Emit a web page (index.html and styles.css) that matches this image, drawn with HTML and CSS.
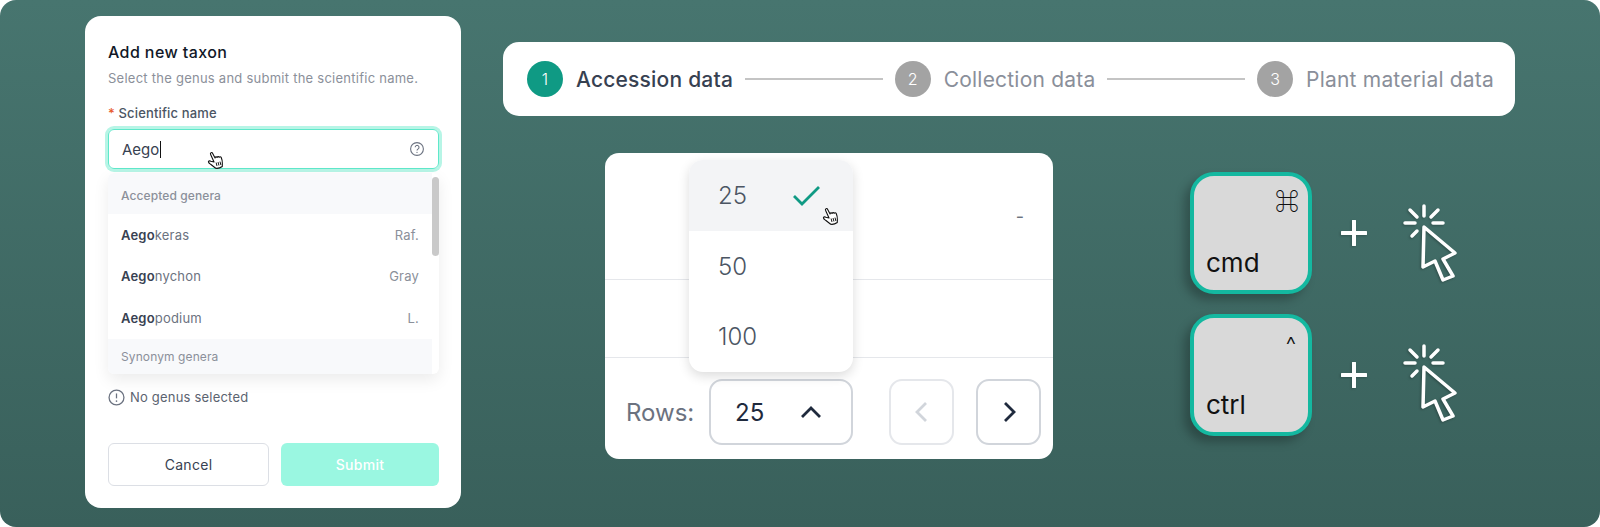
FILE: index.html
```html
<!DOCTYPE html>
<html lang="en">
<head>
<meta charset="utf-8">
<title>Taxon UI details</title>
<link rel="stylesheet" href="styles.css">
</head>
<body>
<main class="canvas">
  <section class="card">
    <h1 class="card-title">Add new taxon</h1>
    <p class="card-sub">Select the genus and submit the scientific name.</p>
    <label class="field-label"><span class="req">*</span> Scientific name</label>
    <div class="input">
      <span class="input-text">Aego</span><span class="caret"></span>
      <svg class="help" viewBox="0 0 16 16"><circle cx="8" cy="8" r="6.4"/><path d="M6.2 6.3a1.9 1.9 0 1 1 2.9 1.6c-.7.4-1.1.8-1.1 1.5"/><circle class="dot" cx="8" cy="11.4" r=".6"/></svg>
      <svg class="hand hand-input" viewBox="0 0 18 20"><use href="#hand"/></svg>
    </div>
    <div class="menu">
      <div class="menu-group">Accepted genera</div>
      <div class="menu-item"><span><b>Aego</b>keras</span><span class="author">Raf.</span></div>
      <div class="menu-item"><span><b>Aego</b>nychon</span><span class="author">Gray</span></div>
      <div class="menu-item"><span><b>Aego</b>podium</span><span class="author">L.</span></div>
      <div class="menu-group menu-group-last">Synonym genera</div>
      <div class="scroll-thumb"></div>
    </div>
    <div class="hint">
      <svg class="hint-icon" viewBox="0 0 16 16"><circle cx="8" cy="8" r="7"/><path d="M8 4.2v4.6"/><circle class="dot" cx="8" cy="11.4" r=".8"/></svg>
      No genus selected
    </div>
    <div class="actions">
      <button class="btn btn-cancel">Cancel</button>
      <button class="btn btn-submit">Submit</button>
    </div>
  </section>

  <div class="right">
    <nav class="stepper">
      <span class="step-num active">1</span><span class="step-text active">Accession data</span>
      <span class="step-line"></span>
      <span class="step-num">2</span><span class="step-text">Collection data</span>
      <span class="step-line"></span>
      <span class="step-num">3</span><span class="step-text">Plant material data</span>
    </nav>

    <div class="lower">
      <section class="table-card">
        <div class="t-row t-row-1"><span class="dash">-</span></div>
        <div class="t-row t-row-2"></div>
        <div class="pager">
          <span class="rows-label">Rows:</span>
          <div class="select"><span>25</span>
            <svg class="chev" viewBox="0 0 24 24"><path d="M3 17 12 8l9 9"/></svg>
          </div>
          <div class="page-btn page-prev"><svg viewBox="0 0 24 24"><path d="M16 3 7 12l9 9"/></svg></div>
          <div class="page-btn page-next"><svg viewBox="0 0 24 24"><path d="M8 3l9 9-9 9"/></svg></div>
        </div>
        <div class="dropdown">
          <div class="dd-item dd-selected"><span>25</span>
            <svg class="check" viewBox="0 0 28 22"><path d="M2 11l8 8L27 2"/></svg>
            <svg class="hand hand-dd" viewBox="0 0 18 20"><use href="#hand"/></svg>
          </div>
          <div class="dd-item"><span>50</span></div>
          <div class="dd-item"><span>100</span></div>
        </div>
      </section>

      <section class="shortcuts">
        <div class="shortcut">
          <div class="key"><span class="key-sym">⌘</span><span class="key-name">cmd</span></div>
          <svg class="plus" viewBox="0 0 26 26"><path d="M13 1v24M1 13h24"/></svg>
          <svg class="click" viewBox="0 0 54 78"><use href="#click"/></svg>
        </div>
        <div class="shortcut">
          <div class="key"><span class="key-sym key-caret">^</span><span class="key-name">ctrl</span></div>
          <svg class="plus" viewBox="0 0 26 26"><path d="M13 1v24M1 13h24"/></svg>
          <svg class="click" viewBox="0 0 54 78"><use href="#click"/></svg>
        </div>
      </section>
    </div>
  </div>
</main>

<svg class="defs" width="0" height="0">
  <defs>
    <symbol id="hand" viewBox="0 0 18 20">
      <g transform="rotate(-14 9 10)">
        <path d="M6.600 11.500 5.100 3c-.2-1.500 1.800-1.900 2.200-.5l1.300 5.300c.2-1.200 1.900-1.100 2.100.1.300-1 1.800-.9 2 .3.400-.8 1.800-.5 2 .6.300 2 .2 4.300-.4 6.200l-.8 2.900c-2.300.8-5 .8-6.800 0L3 13.200c-.7-.8-2.200-2.300-1.800-3.300.4-1 1.700-.7 2.500 0z" fill="#fff" stroke="#111" stroke-width="1.100" stroke-linejoin="round"/>
        <path d="M8.500 12.500v3.500M10.500 12.500v3.500M12.500 12.500v3.500" stroke="#111" stroke-width=".9" fill="none"/>
      </g>
    </symbol>
    <symbol id="click" viewBox="0 0 54 78">
      <g fill="none" stroke="#fff" stroke-width="3.500" stroke-linecap="round" stroke-linejoin="round">
        <path d="M21 2v10M7 6l7 7M35 6l-7 7M2 19h10M30 19h10M9 32l5-5"/>
        <path d="M21 23 52 49 40 55 50 72 40 76 32 57 20 63z"/>
      </g>
    </symbol>
  </defs>
</svg>
</body>
</html>
```
FILE: styles.css
```css
* { box-sizing: border-box; }
html, body { margin: 0; padding: 0; }
body {
  width: 1600px;
  height: 527px;
  overflow: hidden;
  background: #fff;
  font-family: Inter, "Liberation Sans", sans-serif;
}
.defs { position: absolute; }
.canvas {
  width: 1600px;
  height: 527px;
  border-radius: 16px;
  background: linear-gradient(180deg, #47756f 0%, #39605b 100%);
  display: flex;
  align-items: flex-start;
  padding: 16px 0 0 85px;
}

/* Left card */
.card {
  width: 376px;
  height: 492px;
  background: #fff;
  border-radius: 16px;
  padding: 27px 22px 0 23px;
  display: flex;
  flex-direction: column;
}
.card-title {
  margin: 0;
  font-size: 16px;
  line-height: 18px;
  font-weight: 500;
  color: #111827;
  letter-spacing: .4px;
}
.card-sub {
  margin: 9px 0 0;
  font-size: 13px;
  line-height: 16px;
  color: #8b909a;
  letter-spacing: .25px;
}
.field-label {
  margin-top: 19px;
  font-size: 13px;
  line-height: 16px;
  font-weight: 500;
  color: #4b5563;
  letter-spacing: .15px;
}
.req { color: #e8592b; }
.input {
  position: relative;
  margin-top: 8px;
  height: 40px;
  border: 1px solid #5fe8ca;
  border-radius: 6px;
  box-shadow: 0 0 0 3px #b7f5e6;
  display: flex;
  align-items: center;
  padding: 0 13px;
  font-size: 15px;
  color: #374151;
}
.caret { width: 1px; height: 17px; background: #111; margin-left: 1px; }
.help {
  margin-left: auto;
  width: 16px;
  height: 16px;
  fill: none;
  stroke: #6b7280;
  stroke-width: 1.100;
}
.dot { fill: #6b7280; stroke: none; }
.hand { position: absolute; width: 18px; height: 20px; }
.hand-input { left: 98px; top: 20px; }
.menu {
  position: relative;
  margin-top: 4px;
  height: 201px;
  padding-right: 7px;
  border-radius: 6px;
  background: #fff;
  box-shadow: 0 6px 16px rgba(0, 0, 0, .08);
  overflow: hidden;
}
.menu-group {
  height: 41px;
  display: flex;
  align-items: center;
  padding: 3px 13px 0;
  background: #f8f9fb;
  font-size: 12px;
  font-weight: 500;
  color: #8b909a;
  letter-spacing: .1px;
}
.menu-group-last { font-weight: 400; height: 35px; padding-top: 1px; }
.menu-item {
  height: 41.670px;
  display: flex;
  align-items: center;
  justify-content: space-between;
  padding: 0 13px;
  font-size: 13px;
  color: #6b7280;
  letter-spacing: .2px;
}
.menu-item b { color: #374151; font-weight: 600; }
.author { color: #8b909a; }
.scroll-thumb {
  position: absolute;
  top: 4px;
  right: 0;
  width: 7px;
  height: 79px;
  background: #c9c9c9;
  border-radius: 4px;
}
.hint {
  margin-top: 14px;
  display: flex;
  align-items: center;
  gap: 5px;
  font-size: 13px;
  line-height: 18px;
  color: #5b6370;
  letter-spacing: .2px;
}
.hint-icon {
  width: 17px;
  height: 17px;
  fill: none;
  stroke: #6b7280;
  stroke-width: 1.200;
}
.actions { margin-top: 37px; display: flex; gap: 12px; }
.btn {
  height: 43px;
  border-radius: 6px;
  font-family: inherit;
  font-size: 14px;
  letter-spacing: .3px;
}
.btn-cancel {
  width: 161px;
  background: #fff;
  border: 1px solid #dcdfe5;
  color: #374151;
}
.btn-submit {
  width: 158px;
  background: #9af7e1;
  border: 0;
  color: #fff;
  font-weight: 500;
}

/* Right column */
.right { margin: 26px 0 0 42px; width: 1012px; }
.stepper {
  width: 1012px;
  height: 74px;
  background: #fff;
  border-radius: 16px;
  display: flex;
  align-items: center;
  padding: 0 21px 0 24px;
}
.step-num {
  width: 36px;
  height: 36px;
  flex: none;
  border-radius: 50%;
  background: #a3a3a3;
  color: #fff;
  display: flex;
  align-items: center;
  justify-content: center;
  font-size: 16px;
  font-weight: 300;
}
.step-num.active { background: #0f9a84; }
.step-text {
  margin-left: 13px;
  font-size: 21px;
  color: #8a8f9a;
  white-space: nowrap;
  letter-spacing: .2px;
}
.step-text.active { color: #374151; font-weight: 500; }
.step-line {
  flex: 1;
  height: 2px;
  margin: 0 12px;
  background: #c4c4c4;
}
.lower { display: flex; margin-top: 37px; }

/* Table card */
.table-card {
  position: relative;
  width: 448px;
  height: 306px;
  margin-left: 102px;
  background: #fff;
  border-radius: 14px;
}
.t-row { border-bottom: 1px solid #e5e7eb; position: relative; }
.t-row-1 { height: 127px; display: flex; justify-content: flex-end; align-items: center; padding: 0 29px 0 0; }
.t-row-2 { height: 78px; }
.dash { font-size: 18px; color: #6b7280; }
.pager {
  display: flex;
  align-items: center;
  padding: 21px 0 0 21px;
}
.rows-label { font-size: 24px; color: #6b7280; width: 83px; flex: none; }
.select {
  width: 144px;
  height: 66px;
  border: 2px solid #d1d5db;
  border-radius: 13px;
  display: flex;
  align-items: center;
  padding: 0 28px 0 24px;
  justify-content: space-between;
  font-size: 24px;
  color: #1f2a3d;
}
.chev { width: 24px; height: 24px; fill: none; stroke: #1f2a3d; stroke-width: 2.800; }
.page-btn {
  width: 65px;
  height: 66px;
  border: 2px solid #d1d5db;
  border-radius: 13px;
  display: flex;
  align-items: center;
  justify-content: center;
}
.page-btn svg { width: 24px; height: 24px; fill: none; stroke-width: 2.800; }
.page-prev { margin-left: 36px; border-color: #e5e7eb; }
.page-prev svg { stroke: #d1d5db; }
.page-next { margin-left: 22px; }
.page-next svg { stroke: #1f2a3d; }

.dropdown {
  position: absolute;
  left: 84px;
  top: 7px;
  width: 164px;
  height: 212px;
  background: #fff;
  border-radius: 14px;
  overflow: hidden;
  box-shadow: 0 4px 12px rgba(0, 0, 0, .14);
}
.dd-item {
  position: relative;
  height: 70px;
  display: flex;
  align-items: center;
  padding-left: 29px;
  font-size: 24px;
  font-weight: 300;
  color: #4b5563;
}
.dd-selected { background: #f3f4f6; height: 71px; }
.check {
  position: absolute;
  left: 103px;
  top: 25px;
  width: 28px;
  height: 22px;
  fill: none;
  stroke: #0f9a84;
  stroke-width: 2.800;
}
.hand-dd { left: 133px; top: 46px; }

/* Keys */
.shortcuts {
  margin-left: 137px;
  margin-top: 19px;
  display: flex;
  flex-direction: column;
  gap: 20px;
}
.shortcut { display: flex; align-items: center; }
.key {
  position: relative;
  width: 122px;
  height: 122px;
  background: #d9d9d9;
  border: 4px solid #14b8a0;
  border-radius: 24px;
  box-shadow: -6px 6px 10px rgba(0, 0, 0, .25);
  color: #111;
}
.key-sym {
  position: absolute;
  top: 10px;
  right: 9px;
  font-size: 24px;
  line-height: 28px;
  font-weight: 500;
  font-family: "Noto Sans CJK JP", "DejaVu Sans", sans-serif;
}
.key-caret { top: 13px; right: 12px; font-size: 23px; font-weight: 300; font-family: Inter, sans-serif; }
.key-name {
  position: absolute;
  left: 12px;
  bottom: 12px;
  font-size: 26px;
  line-height: 30px;
}
.plus {
  margin-left: 29px;
  width: 26px;
  height: 26px;
  fill: none;
  stroke: #fff;
  stroke-width: 4;
  stroke-linecap: round;
  filter: drop-shadow(-1px 1px 1px rgba(0, 0, 0, .2));
}
.click {
  margin-left: 36px;
  margin-top: 20px;
  width: 54px;
  height: 78px;
  filter: drop-shadow(-1px 1px 1px rgba(0, 0, 0, .25));
}
.shortcut + .shortcut .click { margin-top: 15px; }
```
